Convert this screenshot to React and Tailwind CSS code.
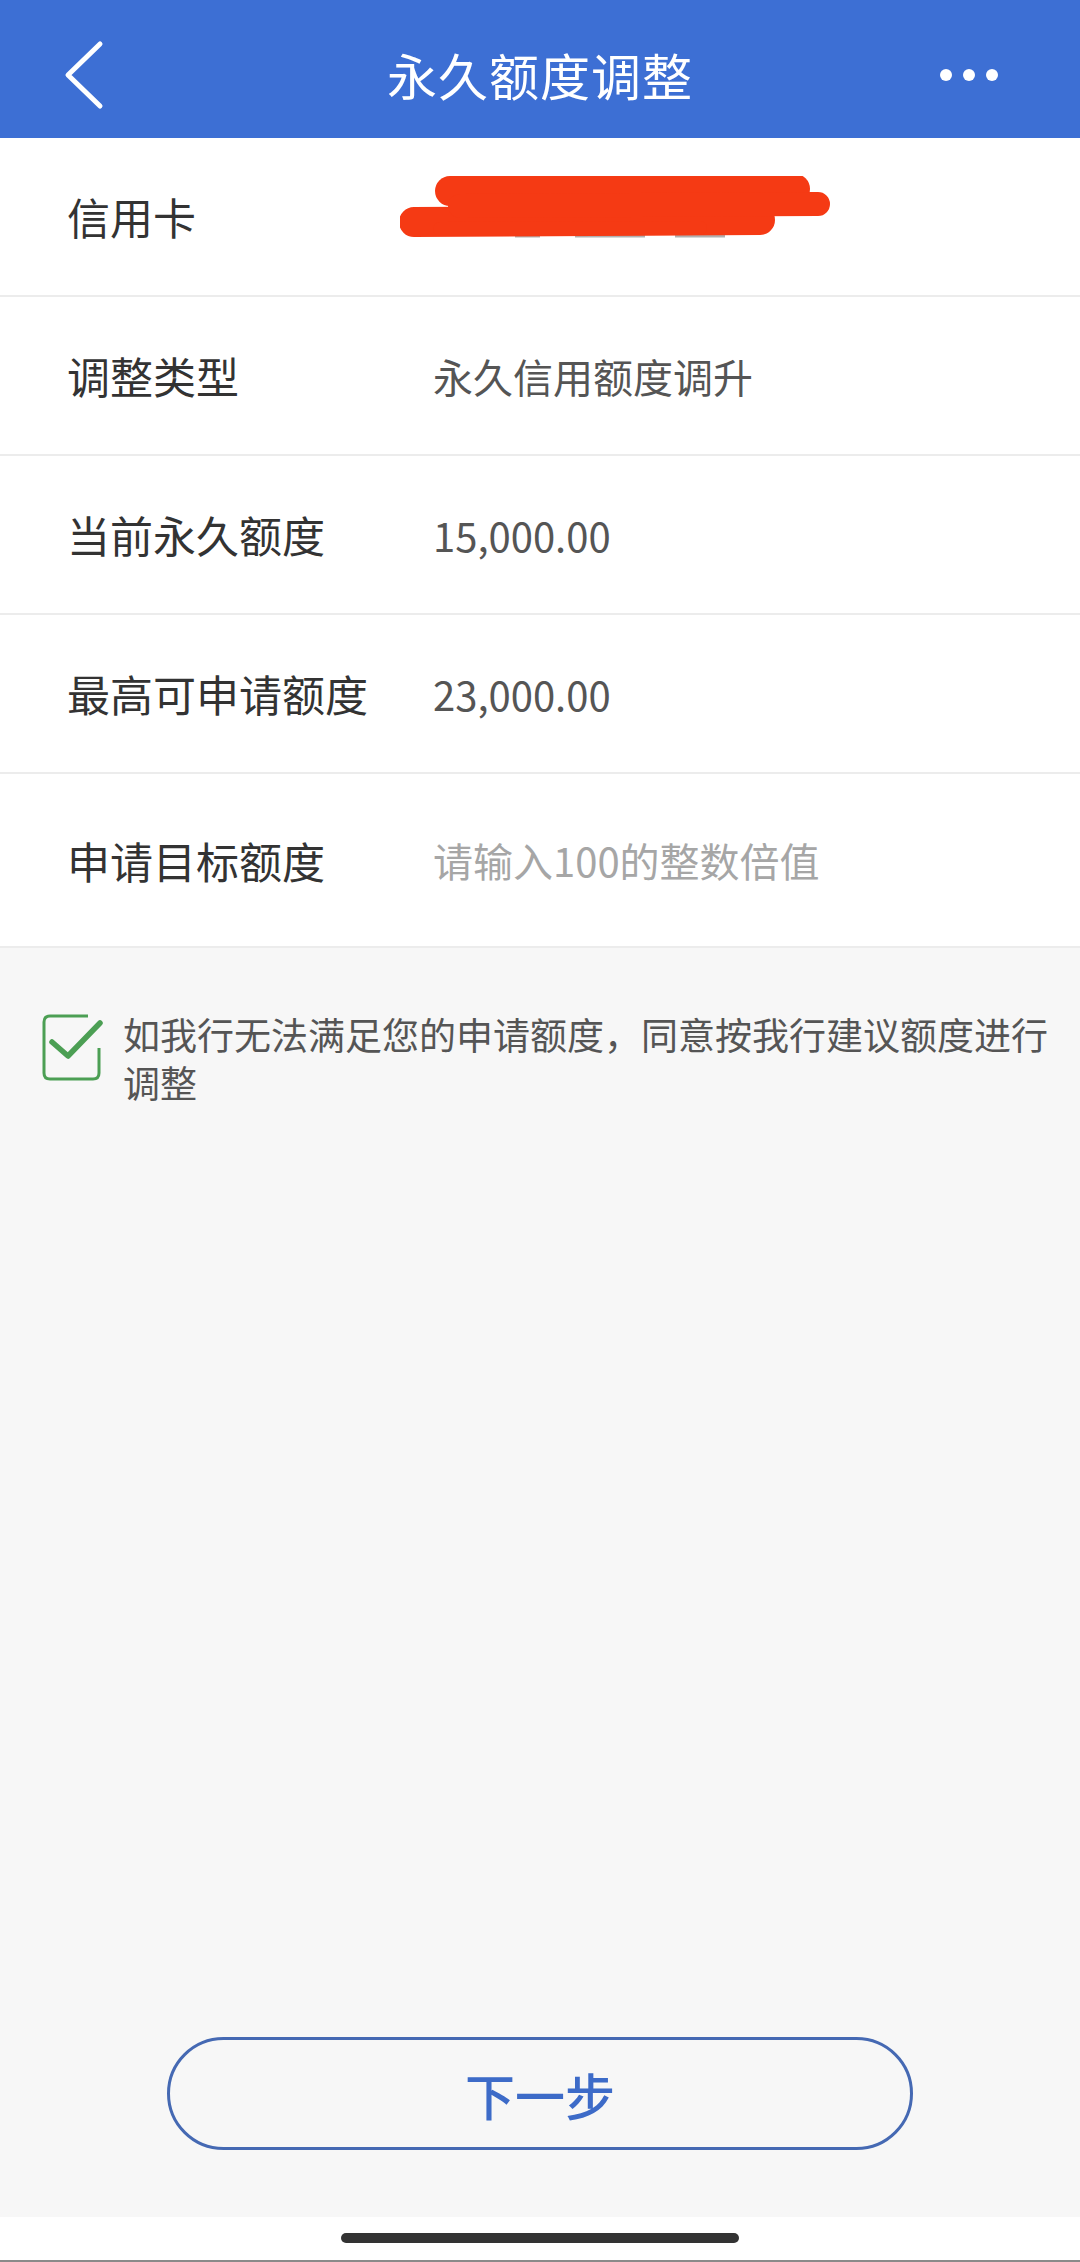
import React from "react";

const FONT = { fontFamily: '"Noto Sans CJK SC", "Noto Sans", sans-serif' };

function Row({ label, children, tall }) {
  return (
    <div
      className={`flex items-center bg-white border-b-2 border-[#ececec] ${
        tall ? "h-[174px]" : "h-[159px]"
      }`}
    >
      <div className="w-[433px] pl-[67px] text-[43px] text-[#333333] leading-none shrink-0">
        {label}
      </div>
      <div className="flex-1 text-[40px] leading-none">{children}</div>
    </div>
  );
}

export default function App() {
  return (
    <div className="w-[1080px] h-[2262px] flex flex-col bg-[#f7f7f7]" style={FONT}>
      {/* Header */}
      <div className="h-[138px] shrink-0 bg-[#3d6fd4] grid grid-cols-[1fr_auto_1fr] items-center pt-[12px]">
        <div className="pl-[64px] flex items-center">
          <svg width="42" height="70" viewBox="0 0 42 70">
            <polyline
              points="36,4 4,35 36,66"
              fill="none"
              stroke="#ffffff"
              strokeWidth="5"
              strokeLinecap="round"
              strokeLinejoin="round"
            />
          </svg>
        </div>
        <div className="text-white text-[50px] leading-none tracking-[1px] pb-[2px]">
          永久额度调整
        </div>
        <div className="flex justify-end pr-[82px] gap-[11px]">
          <span className="w-[12px] h-[12px] rounded-full bg-white" />
          <span className="w-[12px] h-[12px] rounded-full bg-white" />
          <span className="w-[12px] h-[12px] rounded-full bg-white" />
        </div>
      </div>

      {/* Rows */}
      <Row label="信用卡">
        <div className="relative h-[70px] w-[440px] -ml-[33px] -mt-[12px]">
          <svg
            width="440"
            height="70"
            viewBox="0 0 440 70"
            className="absolute left-0 top-0"
          >
            <path d="M115 60 L140 60 M175 60 L245 60 M275 60 L325 60" stroke="#b0b0b0" strokeWidth="3" fill="none" />
            <path d="M50 15 L395 13" stroke="#f53a14" strokeWidth="30" strokeLinecap="round" fill="none" />
            <path d="M14 46 L360 44" stroke="#f53a14" strokeWidth="30" strokeLinecap="round" fill="none" />
            <path d="M60 30 L418 28" stroke="#f53a14" strokeWidth="24" strokeLinecap="round" fill="none" />
            <path d="M40 53 L300 52" stroke="#f53a14" strokeWidth="14" strokeLinecap="round" fill="none" />
          </svg>
        </div>
      </Row>
      <Row label="调整类型">
        <span className="text-[#555555]">永久信用额度调升</span>
      </Row>
      <Row label="当前永久额度">
        <span className="text-[#555555]">15,000.00</span>
      </Row>
      <Row label="最高可申请额度">
        <span className="text-[#555555]">23,000.00</span>
      </Row>
      <Row label="申请目标额度" tall>
        <span className="text-[#a6a6a6]">请输入100的整数倍值</span>
      </Row>

      {/* Agreement */}
      <div className="flex items-start pl-[42px] pr-[30px] pt-[62px]">
        <svg width="62" height="68" viewBox="0 0 62 68" className="shrink-0 mt-[4px]">
          <path
            d="M46 2 L8 2 Q2 2 2 8 L2 59 Q2 65 8 65 L51 65 Q57 65 57 59 L57 34"
            fill="none"
            stroke="#4c9f54"
            strokeWidth="3"
          />
          <polyline
            points="10,28 26,42 58,9"
            fill="none"
            stroke="#4c9f54"
            strokeWidth="5.5"
            strokeLinecap="round"
            strokeLinejoin="round"
          />
        </svg>
        <div className="ml-[19px] text-[37px] leading-[48px] text-[#555555]">
          如我行无法满足您的申请额度，同意按我行建议额度进行调整
        </div>
      </div>

      <div className="flex-1" />

      {/* Button */}
      <div className="flex justify-center mb-[67px]">
        <div className="w-[746px] h-[113px] rounded-full border-[3px] border-[#4569b3] flex items-center justify-center text-[50px] font-medium leading-none text-[#3d6bc8]">
          下一步
        </div>
      </div>

      {/* Home indicator band */}
      <div className="h-[45px] shrink-0 bg-white flex flex-col">
        <div className="flex-1 flex items-center justify-center pb-[2px]">
          <span className="w-[398px] h-[10px] rounded-full bg-[#333333]" />
        </div>
        <div className="h-[2px] bg-[#8a8a8a]" />
      </div>
    </div>
  );
}
